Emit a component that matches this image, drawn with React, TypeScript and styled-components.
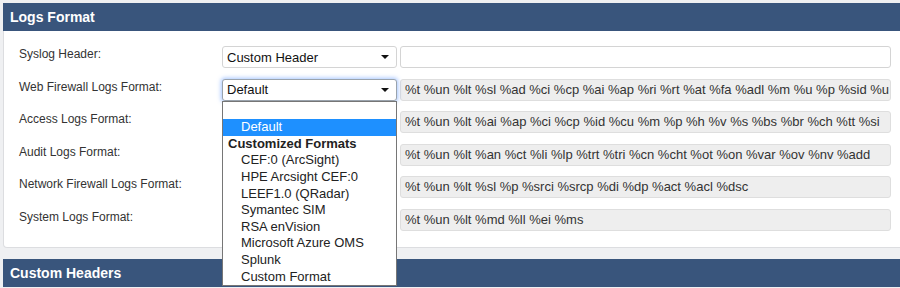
import React from "react";
import styled, { createGlobalStyle } from "styled-components";

const GlobalStyle = createGlobalStyle`
  html, body {
    margin: 0;
    overflow: hidden;
    background: #eff0f2;
    font-family: "Liberation Sans", Arial, sans-serif;
  }
`;

type Row = {
  label: string;
  select?: string;
  value: string;
  open?: boolean;
  editable?: boolean;
};

const rows: Row[] = [
  { label: "Syslog Header:", select: "Custom Header", value: "", editable: true },
  {
    label: "Web Firewall Logs Format:",
    select: "Default",
    open: true,
    value:
      "%t %un %lt %sl %ad %ci %cp %ai %ap %ri %rt %at %fa %adl %m %u %p %sid %u",
  },
  {
    label: "Access Logs Format:",
    value: "%t %un %lt %ai %ap %ci %cp %id %cu %m %p %h %v %s %bs %br %ch %tt %si",
  },
  {
    label: "Audit Logs Format:",
    value: "%t %un %lt %an %ct %li %lp %trt %tri %cn %cht %ot %on %var %ov %nv %add",
  },
  {
    label: "Network Firewall Logs Format:",
    value: "%t %un %lt %sl %p %srci %srcp %di %dp %act %acl %dsc",
  },
  { label: "System Logs Format:", value: "%t %un %lt %md %ll %ei %ms" },
];

const options = [
  "CEF:0 (ArcSight)",
  "HPE Arcsight CEF:0",
  "LEEF1.0 (QRadar)",
  "Symantec SIM",
  "RSA enVision",
  "Microsoft Azure OMS",
  "Splunk",
  "Custom Format",
];

const Page = styled.div`
  width: 910px;
  padding: 3px 0 0 3px;
`;

const SectionBar = styled.div`
  height: 28px;
  background: #39557c;
  color: #fff;
  font-size: 14px;
  font-weight: bold;
  display: flex;
  align-items: center;
  padding: 0 7px;
`;

const Panel = styled.div`
  background: #fff;
  border: 1px solid #dcdde0;
  border-top: none;
  border-radius: 0 0 4px 4px;
  padding: 15px 21px 16px 15px;
  margin-bottom: 11px;
  display: flex;
  flex-direction: column;
  gap: 10.6px;
`;

const FormRow = styled.div`
  display: grid;
  grid-template-columns: 200px 175px 1fr;
  column-gap: 3px;
  align-items: start;
`;

const Label = styled.div`
  font-size: 12px;
  color: #333;
  padding-top: 1px;
  grid-column: 1;
`;

const SelectWrap = styled.div`
  position: relative;
  grid-column: 2;
`;

const SelectBox = styled.div<{ $focused?: boolean }>`
  height: 22px;
  box-sizing: border-box;
  border: 1px solid ${(p) => (p.$focused ? "#9aa3ad" : "#d4d4d4")};
  border-radius: 3px;
  background: #fff;
  font-size: 13px;
  color: #111;
  display: flex;
  align-items: center;
  justify-content: space-between;
  padding: 0 7px 0 4px;
  box-shadow: ${(p) => (p.$focused ? "0 0 4px 1px rgba(90,150,255,0.55)" : "none")};
`;

const Caret = styled.span`
  width: 0;
  height: 0;
  border-left: 4px solid transparent;
  border-right: 4px solid transparent;
  border-top: 4px solid #111;
`;

const TextField = styled.div<{ $editable?: boolean }>`
  grid-column: 3;
  height: 22px;
  box-sizing: border-box;
  border: 1px solid ${(p) => (p.$editable ? "#d4d4d4" : "#dedede")};
  border-radius: 3px;
  background: ${(p) => (p.$editable ? "#fff" : "#eee")};
  font-size: 13px;
  color: #333;
  padding: 0 4px;
  line-height: 20px;
  white-space: nowrap;
  overflow: hidden;
`;

const DropList = styled.div`
  position: absolute;
  top: 22px;
  left: 0;
  width: 175px;
  box-sizing: border-box;
  border: 1px solid #767676;
  background: #fff;
  padding-top: 1px;
  z-index: 10;
  font-size: 13px;
  color: #222;
`;

const Item = styled.div<{ $selected?: boolean; $group?: boolean }>`
  height: 16.6px;
  line-height: 16.6px;
  white-space: nowrap;
  padding-left: ${(p) => (p.$group ? "5px" : "18px")};
  font-weight: ${(p) => (p.$group ? "bold" : "normal")};
  background: ${(p) => (p.$selected ? "#1e90ff" : "transparent")};
  color: ${(p) => (p.$selected ? "#fff" : "#222")};
`;

const Dropdown: React.FC = () => (
  <DropList>
    <Item>&nbsp;</Item>
    <Item $selected>Default</Item>
    <Item $group>Customized Formats</Item>
    {options.map((o) => (
      <Item key={o}>{o}</Item>
    ))}
  </DropList>
);

export default function App() {
  return (
    <Page>
      <GlobalStyle />
      <SectionBar>Logs Format</SectionBar>
      <Panel>
        {rows.map((r) => (
          <FormRow key={r.label}>
            <Label>{r.label}</Label>
            {r.select && (
              <SelectWrap>
                <SelectBox $focused={r.open}>
                  {r.select}
                  <Caret />
                </SelectBox>
                {r.open && <Dropdown />}
              </SelectWrap>
            )}
            <TextField $editable={r.editable}>{r.value}</TextField>
          </FormRow>
        ))}
      </Panel>
      <SectionBar>Custom Headers</SectionBar>
    </Page>
  );
}
